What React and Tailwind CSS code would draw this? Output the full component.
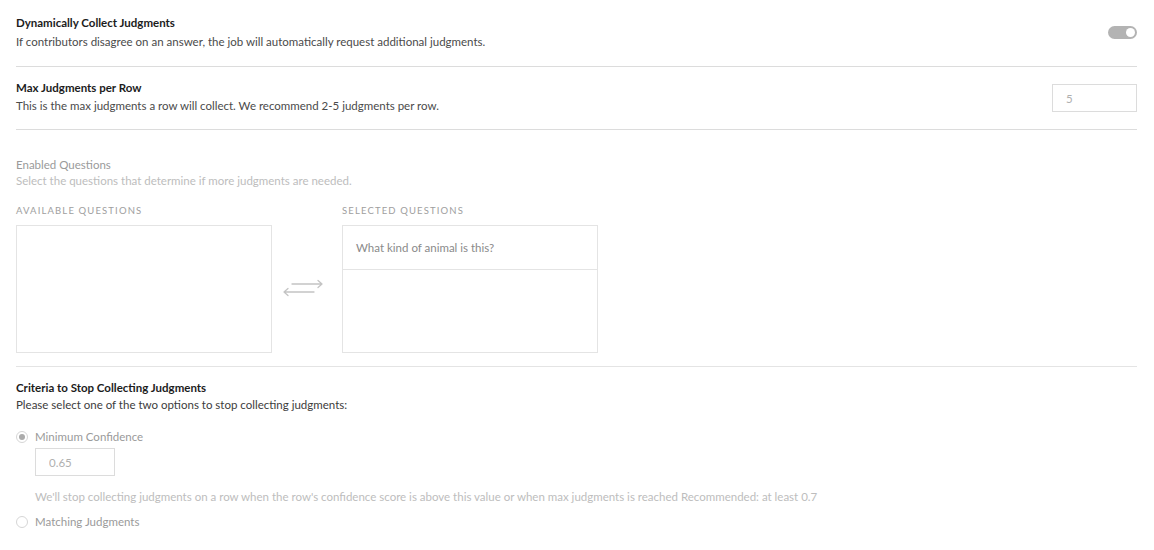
import React from 'react';

const SwapArrows = () => (
  <svg width="40" height="20" viewBox="0 0 40 20" fill="none" stroke="#c4c4c4" strokeWidth="1.3" strokeLinecap="round" strokeLinejoin="round">
    <path d="M9 6h30M35 2.5l4 3.5-4 3.5" />
    <path d="M1 14h30M5 10.5l-4 3.5 4 3.5" />
  </svg>
);

const Radio = ({ checked }) => (
  <span className="flex h-[12px] w-[12px] shrink-0 items-center justify-center rounded-full border border-[#d6d6d6] bg-white">
    {checked && <span className="h-[6px] w-[6px] rounded-full bg-[#ababab]" />}
  </span>
);

const SettingRow = ({ title, desc, children, className, gap = 'mt-[3px]' }) => (
  <div className={`flex items-center justify-between border-b border-[#dcdcdc] ${className}`}>
    <div>
      <div className="text-[11.5px] font-bold leading-[16px] text-[#1c1c1c]">{title}</div>
      <div className={`${gap} text-[11.5px] leading-[16px] text-[#4a4a4a]`}>{desc}</div>
    </div>
    {children}
  </div>
);

const QuestionList = ({ label, items = [] }) => (
  <div className="w-[256px]">
    <div className="text-[9.5px] uppercase leading-[12px] tracking-[0.12em] text-[#9e9e9e]">{label}</div>
    <div className="mt-[8px] h-[128px] border border-[#e4e4e4] bg-white">
      {items.map((q) => (
        <div key={q} className="flex h-[44px] items-center border-b border-[#e4e4e4] px-[13px] text-[11.5px] text-[#8a8a8a]">
          {q}
        </div>
      ))}
    </div>
  </div>
);

export default function App() {
  return (
    <div className="min-h-[550px] w-[1154px] bg-white px-[16px] pt-[15px] font-['Lato',sans-serif]">
      <div className="w-[1121px]">
        <SettingRow
          className="pb-[16px]"
          title="Dynamically Collect Judgments"
          desc="If contributors disagree on an answer, the job will automatically request additional judgments."
        >
          <button className="mb-[1px] flex h-[13px] w-[29px] items-center justify-end rounded-full bg-[#b3b3b3] pr-[2px]">
            <span className="h-[9px] w-[9px] rounded-full bg-white" />
          </button>
        </SettingRow>

        <SettingRow
          className="pb-[15px] pt-[13px]"
          gap="mt-[2px]"
          title="Max Judgments per Row"
          desc="This is the max judgments a row will collect. We recommend 2-5 judgments per row."
        >
          <input
            readOnly
            value="5"
            className="mt-[2px] h-[28px] w-[85px] border border-[#dcdcdc] px-[13px] text-[11.5px] text-[#b0b0b0] outline-none"
          />
        </SettingRow>

        <div className="border-b border-[#e4e4e4] pb-[13px] pt-[27px]">
          <div className="text-[11.5px] leading-[16px] text-[#9a9a9a]">Enabled Questions</div>
          <div className="text-[11.5px] leading-[16px] text-[#bdbdbd]">
            Select the questions that determine if more judgments are needed.
          </div>
          <div className="mt-[16px] flex items-center">
            <QuestionList label="Available Questions" />
            <div className="mt-[18px] w-[70px] pl-[11px]">
              <SwapArrows />
            </div>
            <QuestionList label="Selected Questions" items={['What kind of animal is this?']} />
          </div>
        </div>

        <div className="pt-[13px]">
          <div className="text-[11.5px] font-bold leading-[16px] text-[#1c1c1c]">Criteria to Stop Collecting Judgments</div>
          <div className="mt-[1px] text-[11.5px] leading-[16px] text-[#3c3c3c]">
            Please select one of the two options to stop collecting judgments:
          </div>

          <label className="mt-[16px] flex items-center gap-[7px] text-[11.5px] leading-[16px] text-[#9a9a9a]">
            <Radio checked />
            Minimum Confidence
          </label>
          <div className="pl-[19px]">
            <input
              readOnly
              value="0.65"
              className="mt-[3px] h-[28px] w-[80px] border border-[#dcdcdc] px-[13px] text-[11.5px] text-[#b0b0b0] outline-none"
            />
            <div className="mt-[13px] text-[11.5px] leading-[16px] text-[#bdbdbd]">
              We&apos;ll stop collecting judgments on a row when the row&apos;s confidence score is above this value or when max judgments is reached Recommended: at least 0.7
            </div>
          </div>

          <label className="mt-[9px] flex items-center gap-[7px] text-[11.5px] leading-[16px] text-[#9a9a9a]">
            <Radio />
            Matching Judgments
          </label>
        </div>
      </div>
    </div>
  );
}
